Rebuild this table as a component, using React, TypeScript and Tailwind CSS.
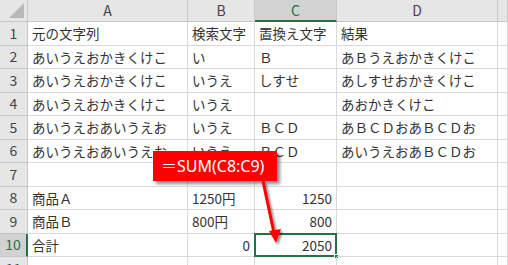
const FONT = "font-['Noto_Sans_CJK_JP','Noto_Sans',sans-serif]";

type Cell = { text: string; align?: "left" | "right" };

const COLS = ["A", "B", "C", "D", ""];

const ROWS: Cell[][] = [
  [{ text: "元の文字列" }, { text: "検索文字" }, { text: "置換え文字" }, { text: "結果" }],
  [{ text: "あいうえおかきくけこ" }, { text: "い" }, { text: "Ｂ" }, { text: "あＢうえおかきくけこ" }],
  [{ text: "あいうえおかきくけこ" }, { text: "いうえ" }, { text: "しすせ" }, { text: "あしすせおかきくけこ" }],
  [{ text: "あいうえおかきくけこ" }, { text: "いうえ" }, { text: "" }, { text: "あおかきくけこ" }],
  [{ text: "あいうえおあいうえお" }, { text: "いうえ" }, { text: "ＢＣＤ" }, { text: "あＢＣＤおあＢＣＤお" }],
  [{ text: "あいうえおあいうえお" }, { text: "いうえ" }, { text: "ＢＣＤ" }, { text: "あいうえおあＢＣＤお" }],
  [],
  [{ text: "商品Ａ" }, { text: "1250円" }, { text: "1250", align: "right" }],
  [{ text: "商品Ｂ" }, { text: "800円" }, { text: "800", align: "right" }],
  [{ text: "合計" }, { text: "0", align: "right" }, { text: "2050", align: "right" }],
  [],
];

export default function App() {
  return (
    <div className={`relative w-[508px] h-[265px] overflow-hidden bg-white text-[13.5px] text-[#333] ${FONT}`}>
      <div className="grid grid-cols-[28px_160px_67px_82px_161px_1fr] grid-rows-[22px_repeat(11,23.5px)]">
        {/* corner */}
        <div className="relative bg-[#e6e6e6] border-r border-b border-[#c8c8c8]">
          <div className="absolute right-[3px] bottom-[3px] w-0 h-0 border-l-[15px] border-l-transparent border-b-[15px] border-b-[#b8b8b8]" />
        </div>
        {COLS.map((c, i) =>
          i === 2 ? (
            <div
              key={i}
              className="flex items-center justify-center bg-[#d2d2d2] border-r border-[#c8c8c8] border-b-2 border-b-[#217346] text-[#217346] text-[14px]"
            >
              {c}
            </div>
          ) : (
            <div
              key={i}
              className="flex items-center justify-center bg-[#e6e6e6] border-r border-b border-[#c8c8c8] text-[#444] text-[14px]"
            >
              {c}
            </div>
          )
        )}
        {ROWS.map((row, r) => (
          <Row key={r} n={r + 1} cells={row} />
        ))}
      </div>

      {/* callout with formula */}
      <div className="absolute left-[153px] top-[151px] w-[124px] h-[30px] bg-[#ff0000] shadow-[3px_3px_3px_rgba(0,0,0,0.45)] flex items-center pl-[8px] text-white text-[16px] leading-none font-['Noto_Sans','Noto_Sans_CJK_JP',sans-serif]">
        ＝SUM(C8:C9)
      </div>
      <svg className="absolute left-0 top-0 pointer-events-none" width="508" height="265">
        <defs>
          <filter id="sh" x="-50%" y="-50%" width="200%" height="200%">
            <feDropShadow dx="2" dy="2" stdDeviation="1.2" floodColor="#000" floodOpacity="0.45" />
          </filter>
        </defs>
        <g filter="url(#sh)">
          <path d="M263 181 Q268 205 274 233" stroke="#ff0000" strokeWidth="3" fill="none" />
          <path d="M269 231 L281 229 L276 243 Z" fill="#ff0000" />
        </g>
      </svg>
    </div>
  );
}

function Row({ n, cells }: { n: number; cells: Cell[] }) {
  const active = n === 10;
  return (
    <>
      {active ? (
        <div className="flex items-center justify-center bg-[#d2d2d2] border-b border-[#c8c8c8] border-r-2 border-r-[#217346] text-[#217346] text-[14px]">
          {n}
        </div>
      ) : (
        <div className="flex items-center justify-center bg-[#e6e6e6] border-r border-b border-[#c8c8c8] text-[#444] text-[14px]">
          {n}
        </div>
      )}
      {[0, 1, 2, 3, 4].map((i) => {
        const cell = cells[i];
        const selected = active && i === 2;
        return (
          <div
            key={i}
            className={`relative flex items-center px-[4px] whitespace-nowrap overflow-visible border-r border-b border-[#dadada] ${
              cell?.align === "right" ? "justify-end" : "justify-start"
            }`}
          >
            {cell?.text}
            {selected && (
              <div className="absolute left-[-1px] top-[-1px] right-[-1px] bottom-[-1px] border-2 border-[#217346]">
                <div className="absolute right-[-4px] bottom-[-4px] w-[5px] h-[5px] bg-[#217346] border border-white" />
              </div>
            )}
          </div>
        );
      })}
    </>
  );
}
